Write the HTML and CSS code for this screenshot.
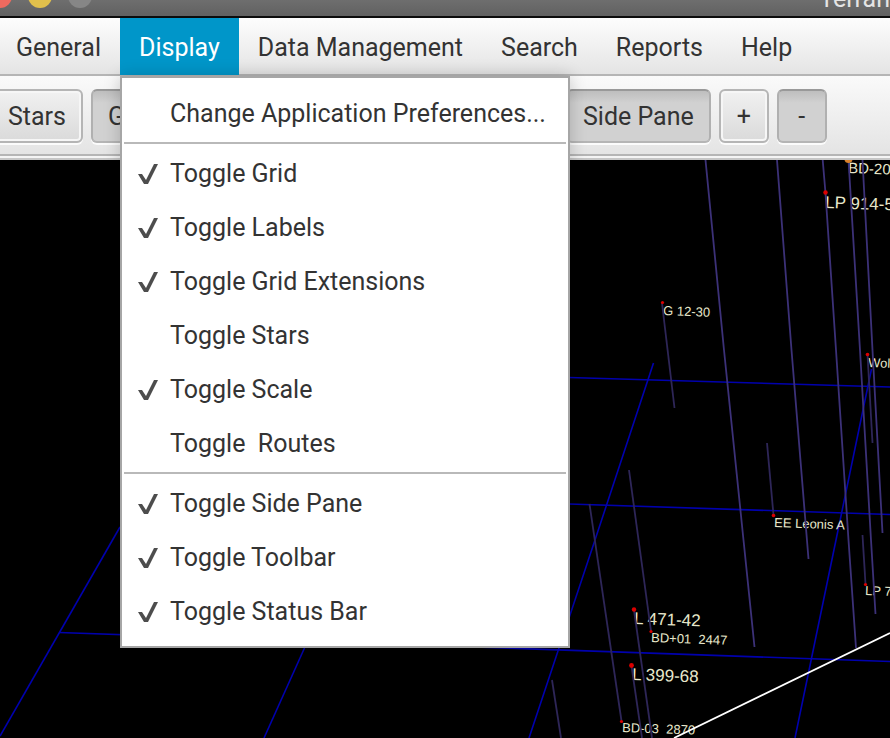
FILE: index.html
```html
<!DOCTYPE html>
<html lang="en">
<head>
<meta charset="utf-8">
<title>Terran</title>
<link rel="stylesheet" href="styles.css">
</head>
<body>
<header class="titlebar">
  <span class="light light-close"></span>
  <span class="light light-minimize"></span>
  <span class="light light-zoom"></span>
  <span class="window-title">Terran</span>
</header>

<nav class="menubar">
  <div class="menu"><button class="menu-button" type="button">General</button></div>
  <div class="menu">
    <button class="menu-button is-open" type="button" aria-haspopup="menu" aria-expanded="true">Display</button>
    <div class="dropdown" role="menu">
      <button class="item" type="button" role="menuitem">Change Application Preferences...</button>
      <hr class="separator">
      <button class="item" type="button" role="menuitemcheckbox" aria-checked="true"><svg class="check" viewBox="0 0 10 10"><path d="M0 5H2L4 8L8 0H10L5 10H3Z"/></svg>Toggle Grid</button>
      <button class="item" type="button" role="menuitemcheckbox" aria-checked="true"><svg class="check" viewBox="0 0 10 10"><path d="M0 5H2L4 8L8 0H10L5 10H3Z"/></svg>Toggle Labels</button>
      <button class="item" type="button" role="menuitemcheckbox" aria-checked="true"><svg class="check" viewBox="0 0 10 10"><path d="M0 5H2L4 8L8 0H10L5 10H3Z"/></svg>Toggle Grid Extensions</button>
      <button class="item" type="button" role="menuitemcheckbox" aria-checked="false">Toggle Stars</button>
      <button class="item" type="button" role="menuitemcheckbox" aria-checked="true"><svg class="check" viewBox="0 0 10 10"><path d="M0 5H2L4 8L8 0H10L5 10H3Z"/></svg>Toggle Scale</button>
      <button class="item" type="button" role="menuitemcheckbox" aria-checked="false">Toggle  Routes</button>
      <hr class="separator">
      <button class="item" type="button" role="menuitemcheckbox" aria-checked="true"><svg class="check" viewBox="0 0 10 10"><path d="M0 5H2L4 8L8 0H10L5 10H3Z"/></svg>Toggle Side Pane</button>
      <button class="item" type="button" role="menuitemcheckbox" aria-checked="true"><svg class="check" viewBox="0 0 10 10"><path d="M0 5H2L4 8L8 0H10L5 10H3Z"/></svg>Toggle Toolbar</button>
      <button class="item" type="button" role="menuitemcheckbox" aria-checked="true"><svg class="check" viewBox="0 0 10 10"><path d="M0 5H2L4 8L8 0H10L5 10H3Z"/></svg>Toggle Status Bar</button>
    </div>
  </div>
  <div class="menu"><button class="menu-button" type="button">Data Management</button></div>
  <div class="menu"><button class="menu-button" type="button">Search</button></div>
  <div class="menu"><button class="menu-button" type="button">Reports</button></div>
  <div class="menu"><button class="menu-button" type="button">Help</button></div>
</nav>

<div class="toolbar" role="toolbar">
  <div class="tool-group tool-group-plot">
    <button class="tool" type="button">Stars</button>
    <button class="tool is-pressed" type="button" aria-pressed="true">Grid</button>
  </div>
  <div class="tool-group">
    <button class="tool is-pressed" type="button" aria-pressed="true">Side Pane</button>
    <button class="tool" type="button">+</button>
    <button class="tool is-pressed" type="button" aria-pressed="true">-</button>
  </div>
</div>

<main class="plot">
  <svg class="plot-canvas" viewBox="0 160 890 578" preserveAspectRatio="xMinYMin slice">
    <g class="grid-lines">
      <path d="M569 377.5L890 387"/>
      <path d="M569 504L890 514.5"/>
      <path d="M59 632.5L890 661.5"/>
      <path d="M653.5 363L595 540L529 738"/>
      <path d="M871.5 369L836 540L795 738"/>
      <path d="M120 527L0 736"/>
      <path d="M304.5 648L264 738"/>
    </g>
    <g class="labels">
      <text class="size-m" transform="translate(848 173) rotate(2)">BD-20</text>
      <text class="size-l" transform="translate(825 208) rotate(2)">LP 914-5</text>
      <text class="size-s" transform="translate(663 315) rotate(2)">G 12-30</text>
      <text class="size-s" transform="translate(868 367) rotate(2)">Wol</text>
      <text class="size-s" transform="translate(774 527) rotate(2)">EE Leonis A</text>
      <text class="size-s" transform="translate(865 595) rotate(2)">LP 7</text>
      <text class="size-l" transform="translate(634 624) rotate(2)">L 471-42</text>
      <text class="size-s" transform="translate(651 642) rotate(2)">BD+01  2447</text>
      <text class="size-l" transform="translate(632 680) rotate(2)">L 399-68</text>
      <text class="size-s" transform="translate(622 732) rotate(2)">BD-03  2870</text>
    </g>
    <g class="stems">
      <path d="M705.5 160L724 350L743.5 540L754.5 647"/>
      <path d="M777 160L791.5 350L808.5 559"/>
      <path d="M822.7 160L825.5 193L836 350L848.5 540L856 648"/>
      <path d="M848.5 160L860 350L871 540L875.5 614"/>
      <path d="M862.5 160L872.5 350L882.5 533"/>
    </g>
    <g class="stems stems-far">
      <path d="M867.5 354L872.5 443"/>
      <path d="M862.5 535L865.5 584"/>
      <path d="M662 303L674.5 408"/>
      <path d="M767 443L773.5 515"/>
      <path d="M629 470L651 631"/>
      <path d="M589.5 504L621.5 721"/>
      <path d="M634 610L652 738"/>
      <path d="M631.5 666L642 738"/>
      <path d="M552 680L561 738"/>
    </g>
    <path class="route" d="M674 738L890 633"/>
    <circle class="star-orange" cx="848.5" cy="159" r="4"/>
    <g class="stars">
      <circle cx="825.5" cy="192.5" r="2.2"/>
      <circle cx="662.5" cy="302.5" r="1.6"/>
      <circle cx="867.5" cy="354.5" r="1.8"/>
      <circle cx="773.5" cy="515.5" r="1.8"/>
      <circle cx="865.5" cy="584.5" r="1.6"/>
      <circle cx="634" cy="609.5" r="2.2"/>
      <circle cx="651" cy="631.5" r="1.6"/>
      <circle cx="631.5" cy="665.5" r="2.4"/>
      <circle cx="621.5" cy="721.5" r="1.6"/>
    </g>
  </svg>
</main>
</body>
</html>
```
FILE: styles.css
```css
* { box-sizing: border-box; }

body {
  margin: 0;
  height: 100vh;
  display: flex;
  flex-direction: column;
  overflow: hidden;
  background: #000;
  color: #333;
  font: 25px/30px Roboto, "Liberation Sans", sans-serif;
}

button { font: inherit; color: inherit; }

/* Title bar */
.titlebar {
  flex: none;
  height: 18px;
  display: flex;
  align-items: flex-end;
  gap: 16px;
  overflow: hidden;
  background: linear-gradient(#6e6e6e, #616161);
  border-bottom: 2px solid #0c0c0c;
}
.light {
  flex: none;
  width: 24px;
  height: 24px;
  margin-bottom: 8px;
  border-radius: 50%;
}
.light-close { margin-left: -12px; background: #ee6a5f; }
.light-minimize { background: #e1c04c; }
.light-zoom { background: #868686; }
.window-title {
  margin: 0 0 2px auto;
  color: #e4e4e4;
  white-space: nowrap;
}

/* Menu bar */
.menubar {
  flex: none;
  height: 58px;
  display: flex;
  background: linear-gradient(#fdfdfd, #e4e4e4);
  border-bottom: 2px solid #b5b5b5;
}
.menu { position: relative; flex: none; }
.menu:first-child { margin-left: -3px; }
.menu-button {
  height: 57px;
  padding: 2px 19px 0;
  border: 0;
  background: none;
  white-space: nowrap;
}
.menu-button.is-open { background: #0096c9; color: #fff; }

.dropdown {
  position: absolute;
  z-index: 2;
  top: 58px;
  left: 0;
  display: flex;
  flex-direction: column;
  padding: 8px 2px;
  background: #fff;
  border: 2px solid #a6a6a6;
  box-shadow: 0 0 16px rgba(0, 0, 0, .2);
}
.item {
  display: flex;
  align-items: center;
  height: 54px;
  padding: 2px 20px 0 46px;
  border: 0;
  background: none;
  white-space: pre;
}
.check {
  width: 20px;
  height: 20px;
  margin: 0 12px 0 -32px;
  fill: #4d4d4d;
}
.separator {
  width: 100%;
  height: 2px;
  margin: 2px 0;
  border: 0;
  background: #b9b9b9;
}

/* Tool bar */
.toolbar {
  flex: none;
  height: 84px;
  display: flex;
  align-items: flex-start;
  padding-top: 13px;
  background: linear-gradient(#fafafa, #e4e4e4 78px, #b5b5b5 78px, #b5b5b5 80px, #f4f4f4 80px, #f4f4f4 82px, #c6c6c6 82px);
}
.tool-group { display: flex; gap: 8px; }
.tool-group-plot { flex: 0 0 575px; margin-left: -9px; }
.tool {
  height: 54px;
  min-width: 50px;
  padding: 2px 15px 0;
  border: 2px solid #b5b5b5;
  border-radius: 6px;
  background: linear-gradient(#f1f1f1, #dadada);
  box-shadow: inset 0 0 0 2px #f6f6f6, 0 2px 0 #fbfbfb;
  white-space: nowrap;
}
.tool.is-pressed {
  border-color: #999 #b0b0b0 #b5b5b5;
  background: linear-gradient(#bebebe, #d1d1d1 12px, #d1d1d1);
  box-shadow: 0 2px 0 #fbfbfb;
}

/* Star plot */
.plot { flex: 1; min-height: 0; }
.plot-canvas { display: block; width: 100%; height: 100%; }
.grid-lines { fill: none; stroke: #0000ae; stroke-width: 1.6; }
.stems { fill: none; stroke: #3c3178; stroke-width: 1.8; }
.stems-far { stroke: #2e2658; }
.route { fill: none; stroke: #fff; stroke-width: 1.8; }
.stars { fill: #dc0000; }
.star-orange { fill: #d9822b; }
.labels text {
  fill: #e8e8cc;
  font-family: "Liberation Sans", Arial, sans-serif;
  white-space: pre;
}
.size-s { font-size: 13px; }
.size-m { font-size: 15px; }
.size-l { font-size: 17px; }
```
